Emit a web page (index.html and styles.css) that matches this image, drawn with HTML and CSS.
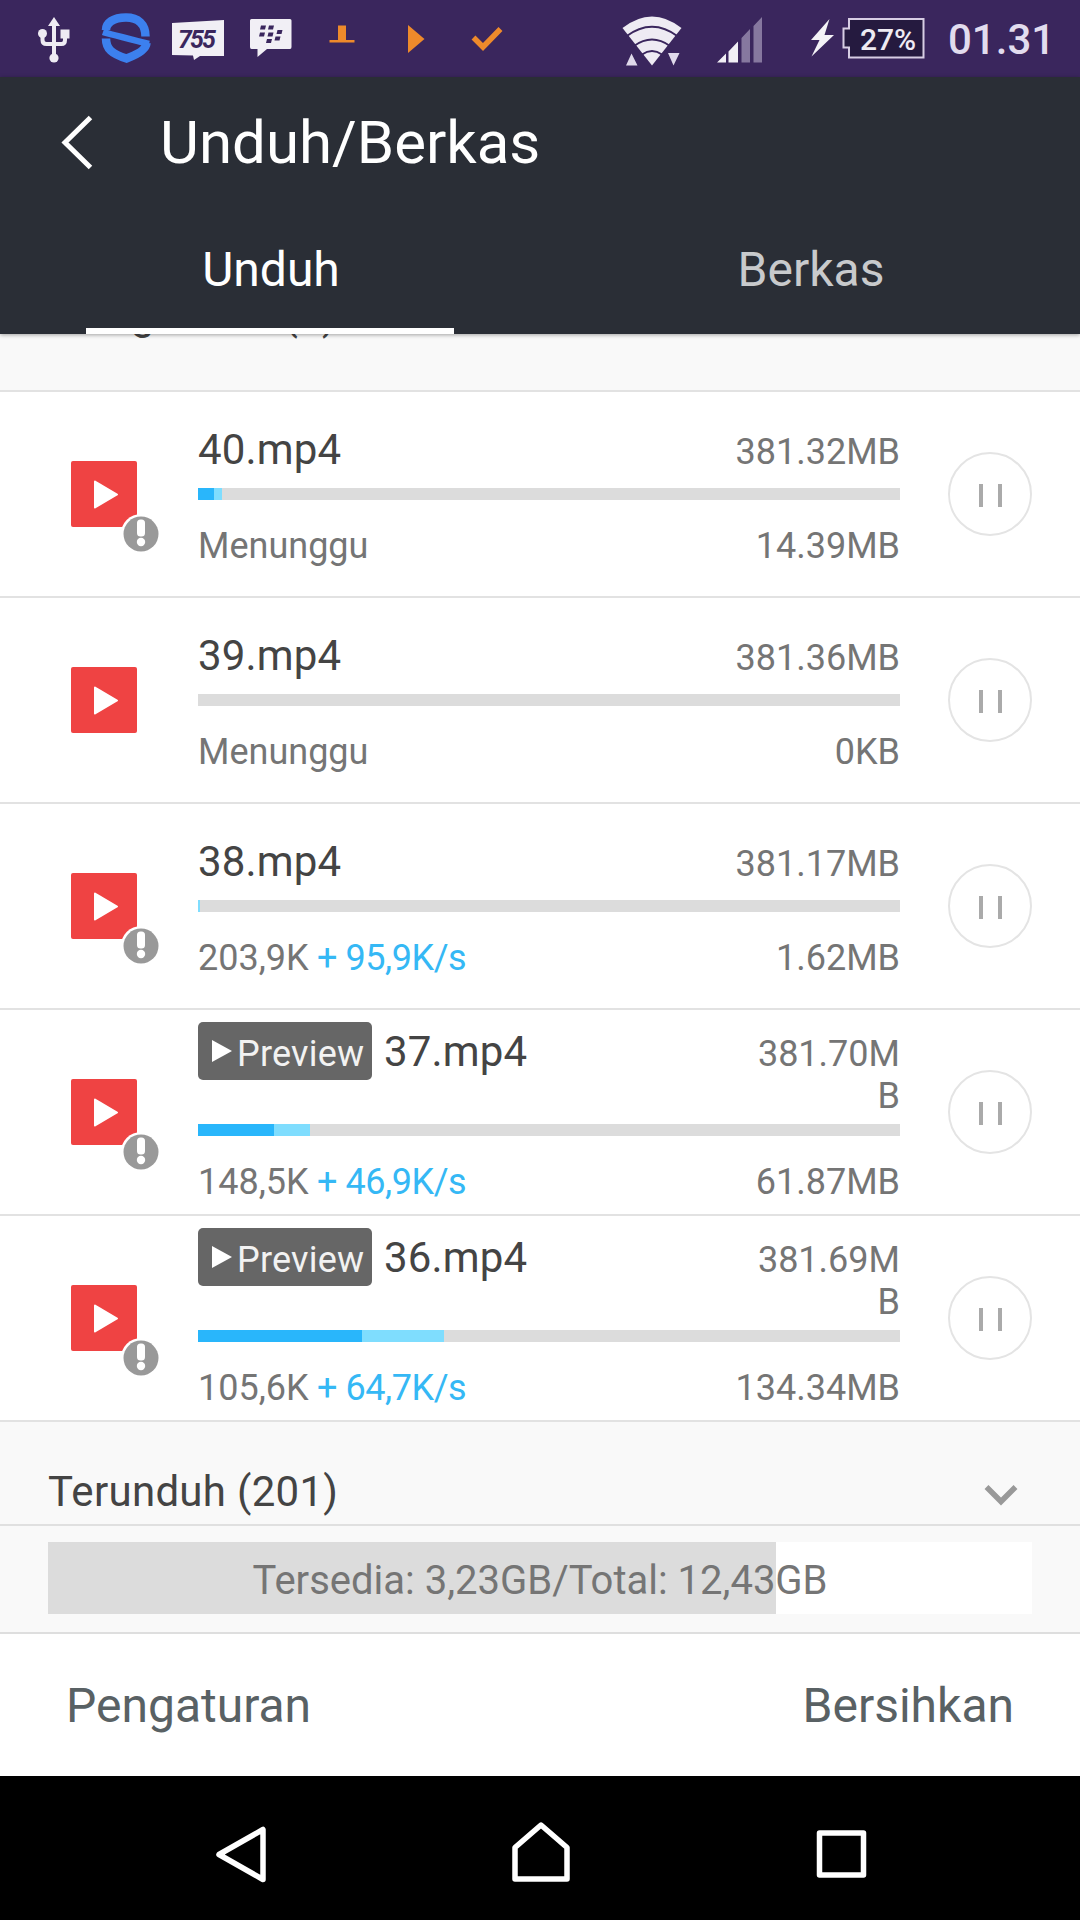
FILE: index.html
```html
<!DOCTYPE html>
<html lang="id">
<head>
<meta charset="utf-8">
<title>Unduh/Berkas</title>
<link rel="stylesheet" href="styles.css">
</head>
<body>
<svg class="defs" aria-hidden="true">
  <symbol id="video" viewBox="0 0 94 94">
    <rect x="1" y="1" width="66" height="66" rx="2" fill="#ef4343"/>
    <path d="M25 21.5L47 34.5 25 47.500z" fill="#fff" stroke="#fff" stroke-width="2" stroke-linejoin="round"/>
  </symbol>
  <symbol id="alert" viewBox="0 0 40 40">
    <circle cx="20" cy="20" r="20" fill="#fff"/>
    <circle cx="20" cy="20" r="17.500" fill="#999"/>
    <rect x="16" y="5.500" width="8" height="17" rx="3.500" fill="#fff"/>
    <circle cx="20" cy="28" r="4.200" fill="#fff"/>
  </symbol>
</svg>
<div class="screen">
  <header class="status">
    <div class="status-left">
      <svg width="90" height="77" viewBox="0 0 90 77"><g fill="#eeebf3"><path d="M54 17l6 9H48z"/><circle cx="54" cy="58" r="4.600"/><circle cx="42.500" cy="33.500" r="4.500"/><rect x="60.500" y="29.500" width="9" height="9"/></g><path d="M54 24v34M42.500 34v6q0 4 4 4h15q3.500 0 3.500-4v-4" fill="none" stroke="#eeebf3" stroke-width="4"/></svg>
      <svg width="70" height="77" viewBox="90 0 70 77"><path d="M145.500 36.500C145.500 24 138 17.500 126 17.500 113 17.500 106 23 106 30" fill="none" stroke="#3c80ee" stroke-width="8.500"/><path d="M106 38.500C106 49 112 54 126.500 58.500 139 54 146 49 146.500 43" fill="none" stroke="#3c80ee" stroke-width="8.500"/><path d="M103 32Q106 33 149 44" fill="none" stroke="#3c80ee" stroke-width="6.500"/></svg>
      <svg width="77" height="77" viewBox="160 0 77 77"><path d="M172 23l52-3v36h-24l-6 4-1-4.500-21-.5z" fill="#f1eff5"/><text class="badge-text" x="178" y="48" textLength="38">755</text></svg>
      <svg width="73" height="77" viewBox="237 0 73 77"><path d="M251.500 19H290q1.500 0 1.500 1.500V47q0 2-1.500 2H267l-9.500 8V49h-6q-1.500 0-1.500-2V20.500q0-1.500 1.500-1.500z" fill="#f1eff5"/><g fill="#3a265d"><path d="M261 25.500h5l-1 4h-5zM269 25.500h5l-1 4h-5zM260 32.500h5l-1 4h-5zM268.500 32.500h5l-1 4h-5zM277.500 30h5l-1 4h-5zM275.500 36.500h5l-1 4h-5zM267 39h5l-1 4h-5z"/></g></svg>
      <svg width="75" height="77" viewBox="310 0 75 77"><path d="M338 25.500h8V40h8.500v2.500h-25V40h8.500z" fill="#ee8a2b"/></svg>
      <svg width="60" height="77" viewBox="385 0 60 77"><path d="M408 25l16.500 14L408 53z" fill="#ee8a2b"/></svg>
      <svg width="75" height="77" viewBox="445 0 75 77"><path d="M473.500 37.500l9.500 9.500 17.500-18" fill="none" stroke="#ee8a2b" stroke-width="5.500"/></svg>
    </div>
    <div class="status-right">
      <svg width="90" height="77" viewBox="610 0 90 77"><path d="M652 65.500L622.500 28Q652 5 681.500 28z" fill="#eeebf3"/><g fill="none" stroke="#3a265d" stroke-width="2"><path d="M626 36.500Q652 17 678 36.500M634 46Q652 33 670 46M642 54.500Q652 47.500 662 54.500"/></g><path d="M626 65.500h11.500L631.500 53.500zM668 53h11.500L673.500 65.500z" fill="#dfd9ea"/></svg>
      <svg width="100" height="77" viewBox="700 0 100 77"><path d="M717 62.500l9-9v9zM728.500 62.500V51.500l9.500-10v21z" fill="#f1eff5"/><path d="M741.500 62.500V38l8.500-9v33.500zM753.500 62.500V26l8.500-9v45.500z" fill="#86789f"/></svg>
      <svg width="136" height="77" viewBox="800 0 136 77"><path d="M829.500 19L811 40h8.500L811.500 56.500 834 35h-9.500z" fill="#f4f2f7"/><path d="M849 19h74.500v38.500H849V47.500h-5.500v-19h5.500z" fill="#251a3f" stroke="#d7cde4" stroke-width="2"/><text class="battery-text" x="860" y="50">27%</text></svg>
      <span class="clock">01.31</span>
    </div>
  </header>

  <div class="appbar">
    <div class="title-row">
      <svg width="34" height="60" viewBox="60 112 34 60"><path d="M90.500 116.500L65 141.500l25.500 25" fill="none" stroke="#fff" stroke-width="5"/></svg>
      <h1>Unduh/Berkas</h1>
    </div>
    <nav class="tabs">
      <div class="tab active">Unduh</div>
      <div class="tab">Berkas</div>
    </nav>
  </div>

  <main class="list">
    <div class="section first">Mengunduh (5)</div>

    <div class="row">
      <div class="thumb"><svg width="94" height="94"><use href="#video"/></svg><svg class="alert" width="40" height="40"><use href="#alert"/></svg></div>
      <div class="info">
        <div class="head"><span class="name">40.mp4</span><span class="size">381.32MB</span></div>
        <div class="bar"><i class="done" style="width:2.3%"></i><i class="buffer" style="width:1.150%"></i></div>
        <div class="foot"><span>Menunggu</span><span>14.39MB</span></div>
      </div>
      <div class="pause"><i></i><i></i></div>
    </div>

    <div class="row">
      <div class="thumb"><svg width="94" height="94"><use href="#video"/></svg></div>
      <div class="info">
        <div class="head"><span class="name">39.mp4</span><span class="size">381.36MB</span></div>
        <div class="bar"></div>
        <div class="foot"><span>Menunggu</span><span>0KB</span></div>
      </div>
      <div class="pause"><i></i><i></i></div>
    </div>

    <div class="row">
      <div class="thumb"><svg width="94" height="94"><use href="#video"/></svg><svg class="alert" width="40" height="40"><use href="#alert"/></svg></div>
      <div class="info">
        <div class="head"><span class="name">38.mp4</span><span class="size">381.17MB</span></div>
        <div class="bar"><i class="buffer" style="width:0.3%"></i></div>
        <div class="foot"><span>203,9K<b> + 95,9K/s</b></span><span>1.62MB</span></div>
      </div>
      <div class="pause"><i></i><i></i></div>
    </div>

    <div class="row with-preview">
      <div class="thumb"><svg width="94" height="94"><use href="#video"/></svg><svg class="alert" width="40" height="40"><use href="#alert"/></svg></div>
      <div class="info">
        <div class="head"><span class="preview"><svg width="20" height="22" viewBox="0 0 20 22"><path d="M0 0l20 11L0 22z" fill="#fff"/></svg>Preview</span><span class="name">37.mp4</span><span class="size">381.70M<br>B</span></div>
        <div class="bar"><i class="done" style="width:10.800%"></i><i class="buffer" style="width:5.200%"></i></div>
        <div class="foot"><span>148,5K<b> + 46,9K/s</b></span><span>61.87MB</span></div>
      </div>
      <div class="pause"><i></i><i></i></div>
    </div>

    <div class="row with-preview">
      <div class="thumb"><svg width="94" height="94"><use href="#video"/></svg><svg class="alert" width="40" height="40"><use href="#alert"/></svg></div>
      <div class="info">
        <div class="head"><span class="preview"><svg width="20" height="22" viewBox="0 0 20 22"><path d="M0 0l20 11L0 22z" fill="#fff"/></svg>Preview</span><span class="name">36.mp4</span><span class="size">381.69M<br>B</span></div>
        <div class="bar"><i class="done" style="width:23.400%"></i><i class="buffer" style="width:11.700%"></i></div>
        <div class="foot"><span>105,6K<b> + 64,7K/s</b></span><span>134.34MB</span></div>
      </div>
      <div class="pause"><i></i><i></i></div>
    </div>

    <div class="section finished">
      <span>Terunduh (201)</span>
      <svg width="38" height="24" viewBox="0 0 38 24"><path d="M4.500 4L19 18.500 33.500 4" fill="none" stroke="#999" stroke-width="5.500"/></svg>
    </div>
  </main>

  <div class="storage"><div class="meter">Tersedia: 3,23GB/Total: 12,43GB</div></div>

  <footer class="actions"><span>Pengaturan</span><span>Bersihkan</span></footer>

  <div class="navbar">
    <svg width="60" height="70" viewBox="210 1819 60 70"><path d="M263 1829.500v50L219 1854.500z"/></svg>
    <svg width="60" height="70" viewBox="511 1819 60 70"><path d="M541 1825l-26 22.500V1879h52V1847.500z"/></svg>
    <svg width="60" height="70" viewBox="811 1819 60 70"><path d="M818.500 1833h44v42h-44z"/></svg>
  </div>
</div>
</body>
</html>
```
FILE: styles.css
```css
* { box-sizing: border-box; }
body { margin: 0; background: #fff; font-family: Roboto, "Liberation Sans", sans-serif; }
svg { display: block; flex: none; }
.defs { position: absolute; width: 0; height: 0; }
.screen { display: flex; flex-direction: column; width: 1080px; height: 1920px; overflow: hidden; }

.status { display: flex; justify-content: space-between; height: 77px; background: #3a265d; }
.status-left, .status-right { display: flex; }
.status-right { width: 470px; }
.badge-text { font-size: 25px; font-weight: 700; font-style: italic; fill: #3a265d; }
.battery-text { font-size: 30px; font-weight: 500; fill: #eeebf3; }
.clock { padding-left: 12px; font-size: 42px; font-weight: 500; line-height: 79px; color: #e2dcee; }

.appbar { position: relative; display: flex; flex-direction: column; height: 257px; background: #2a2e36; box-shadow: 0 1px 4px rgba(0, 0, 0, .35); z-index: 1; }
.title-row { display: flex; align-items: center; height: 132px; padding-left: 60px; gap: 66px; }
h1 { margin: 0; font-size: 60px; font-weight: 400; line-height: 132px; color: #fff; }
.tabs { display: flex; flex: 1; }
.tab { display: flex; flex: 1; justify-content: center; padding: 31px 0 0 2px; font-size: 48px; line-height: 60px; color: #c8cacc; }
.tab.active { color: #fff; background: linear-gradient(#fff, #fff) 86px 100% / 368px 6px no-repeat; }

.list { height: 1192px; overflow: hidden; border-bottom: 2px solid #e0e0e0; }
.section { padding-left: 48px; background: #f9f9f9; font-size: 42px; line-height: 50px; letter-spacing: .3px; color: #444; border-bottom: 2px solid #e2e2e2; }
.section.first { height: 102px; margin-top: -44px; }
.section.finished { display: flex; align-items: flex-start; justify-content: space-between; height: 106px; padding-top: 45px; padding-right: 60px; border: 0; }
.finished svg { margin-top: 16px; }

.row { display: flex; height: 206px; background: #fff; border-bottom: 2px solid #e2e2e2; }
.thumb { position: relative; width: 94px; height: 94px; margin: 68px 34px 0 70px; }
.alert { position: absolute; left: 51px; top: 54px; }
.info { width: 702px; }
.head { display: flex; height: 96px; padding-top: 33px; }
.name { font-size: 42px; line-height: 50px; letter-spacing: .15px; color: #444; }
.size { margin-left: auto; padding-top: 6px; font-size: 36px; line-height: 42px; text-align: right; color: #757575; }
.bar { display: flex; height: 12px; background: #dcdcdc; }
.done { background: #29b6fb; }
.buffer { background: #7fddfe; }
.foot { display: flex; justify-content: space-between; padding-top: 25px; font-size: 36px; line-height: 42px; color: #757575; }
.foot b { font-weight: 400; letter-spacing: -.45px; color: #35b8f5; }
.pause { display: flex; align-items: center; justify-content: center; gap: 15px; width: 84px; height: 84px; margin: 60px 0 0 48px; border: 2px solid #e4e4e4; border-radius: 50%; }
.pause i { width: 4px; height: 23px; margin-top: 2px; background: #aaa; }

.with-preview .head { height: 114px; padding-top: 12px; }
.with-preview .name { padding: 5px 0 0 12px; }
.with-preview .size { padding-top: 11px; }
.preview { display: flex; align-items: center; gap: 5px; width: 174px; height: 58px; padding: 5px 0 0 14px; border-radius: 5px; background: #666; font-size: 36px; line-height: 50px; letter-spacing: .2px; color: #f2f2f2; }
.preview svg { margin-top: -6px; }

.storage { height: 108px; padding: 16px 48px 0; background: #f9f9f9; border-bottom: 2px solid #dedede; }
.meter { height: 72px; font-size: 40px; line-height: 77px; text-align: center; color: #757575; background: linear-gradient(90deg, #dcdcdc 728px, #fff 728px); }
.actions { display: flex; justify-content: space-between; height: 142px; padding: 0 66px; font-size: 48px; line-height: 143px; color: #596164; background: #fff; }
.navbar { display: flex; height: 144px; padding: 43px 0 0 210px; gap: 241px; background: #000; }
.navbar path { fill: none; stroke: #fff; stroke-width: 5.500px; stroke-linejoin: round; }
```
